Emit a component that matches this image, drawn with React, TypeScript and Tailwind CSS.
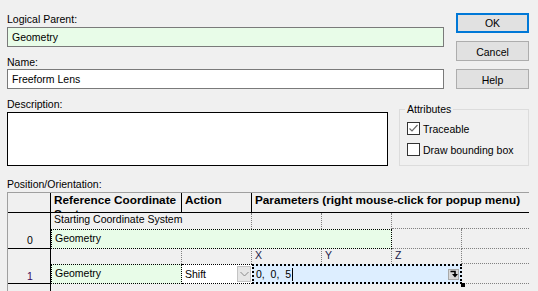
import React from 'react';

const dlgFont = "font-['Liberation_Sans',Arial,sans-serif]";

function Checkbox({ checked }: { checked?: boolean }) {
  return (
    <span className="w-[13px] h-[13px] border border-[#333333] bg-white flex items-center justify-center shrink-0">
      {checked && (
        <svg width="11" height="11" viewBox="0 0 11 11">
          <path d="M1.5 5.5 L4 8 L9.5 2" fill="none" stroke="#6a6a6a" strokeWidth="1.2" />
        </svg>
      )}
    </span>
  );
}

function Button({ label, primary }: { label: string; primary?: boolean }) {
  return (
    <div
      className={
        primary
          ? 'h-[20px] border-2 border-[#0078d7] bg-[#e1e1e1] flex items-center justify-center leading-[14px]'
          : 'h-[20px] border border-[#adadad] bg-[#e1e1e1] flex items-center justify-center leading-[14px] pt-[2px]'
      }
    >
      {label}
    </div>
  );
}

export default function App() {
  return (
    <div className={`w-[538px] h-[291px] overflow-hidden bg-[#f0f0f0] pl-[7px] pr-[9px] pt-[12px] text-[10.5px] leading-[14px] text-black ${dlgFont}`}>
      <div className="flex justify-between">
        <div className="w-[437px]">
          <div>Logical Parent:</div>
          <div className="mt-[1px] h-[20px] border border-[#7a7a7a] bg-[#e8fce8] pl-[4px] leading-[18px]">Geometry</div>
          <div className="mt-[8px]">Name:</div>
          <div className="h-[20px] border border-[#7a7a7a] bg-white pl-[4px] leading-[18px]">Freeform Lens</div>
        </div>
        <div className="w-[73px] mt-[1px] flex flex-col gap-[8px]">
          <Button label="OK" primary />
          <Button label="Cancel" />
          <Button label="Help" />
        </div>
      </div>

      <div className="mt-[8px] flex justify-between">
        <div className="w-[381px]">
          <div>Description:</div>
          <div className="mt-[1px] h-[54px] border border-black bg-white" />
        </div>
        <fieldset className="w-[130px] h-[64px] mt-[5px] border border-[#dcdcdc]">
          <legend className="ml-[5px] px-[2px]">Attributes</legend>
          <div className="mt-[6px] pl-[7px] h-[13px] flex items-center gap-[3px]">
            <Checkbox checked />
            <span>Traceable</span>
          </div>
          <div className="mt-[8px] pl-[7px] h-[13px] flex items-center gap-[3px]">
            <Checkbox />
            <span>Draw bounding box</span>
          </div>
        </fieldset>
      </div>

      <div className="mt-[11px]">Position/Orientation:</div>

      <div className="mt-[1px] border-l border-t border-[#a0a0a0]">
        {/* header */}
        <div className="h-[20px] flex border-b border-black font-bold text-[11.75px] leading-[14px]">
          <div className="w-[43px] border-r border-black" />
          <div className="w-[131px] border-r border-black pl-[3px] overflow-hidden">Reference Coordinate System</div>
          <div className="w-[70px] border-r border-black pl-[3px] overflow-hidden">Action</div>
          <div className="flex-1 pl-[3px] overflow-hidden whitespace-nowrap">Parameters (right mouse-click for popup menu)</div>
        </div>

        {/* row 0 */}
        <div className="flex">
          <div className="w-[43px] h-[36px] border-r border-b border-black flex items-end justify-center pb-[1px] pl-[2px]">0</div>
          <div className="flex-1 flex flex-col">
            <div className="h-[16px] flex">
              <div className="w-[201px] border-r border-dotted border-[#808080] pl-[3px] whitespace-nowrap leading-[13px]">Starting Coordinate System</div>
              <div className="w-[70px] border-r border-dotted border-[#808080]" />
              <div className="w-[70px] border-r border-dotted border-[#808080]" />
              <div className="w-[70px] border-b border-dotted border-[#808080]" />
              <div className="flex-1 border-b border-dotted border-[#808080]" />
            </div>
            <div className="h-[20px] flex">
              <div className="w-[341px] border border-dotted border-black bg-[#e8fce8] pl-[3px] leading-[16px]">Geometry</div>
              <div className="w-[70px] border-r border-b border-dotted border-[#808080]" />
              <div className="flex-1 border-b border-dotted border-[#808080]" />
            </div>
          </div>
        </div>

        {/* row 1 */}
        <div className="flex">
          <div className="w-[43px] h-[35px] border-r border-b border-black flex items-end justify-center pl-[2px] text-[#3a0a5a]">1</div>
          <div className="flex-1 flex flex-col">
            <div className="h-[15px] flex leading-[13px] text-[#20204a]">
              <div className="w-[131px] border-r border-dotted border-[#808080]" />
              <div className="w-[70px] border-r border-dotted border-[#808080]" />
              <div className="w-[70px] border-r border-dotted border-[#808080] pl-[3px]">X</div>
              <div className="w-[70px] border-r border-dotted border-[#808080] pl-[3px]">Y</div>
              <div className="w-[70px] border-r border-dotted border-[#808080] pl-[3px]">Z</div>
              <div className="flex-1 border-b border-dotted border-[#808080]" />
            </div>
            <div className="h-[20px] flex">
              <div className="w-[131px] border border-dotted border-black bg-[#e8fce8] pl-[3px] leading-[16px]">Geometry</div>
              <div className="w-[70px] border-y border-dotted border-black bg-white pl-[3px] flex items-center justify-between pr-[1px]">
                <span className="leading-[14px]">Shift</span>
                <span className="w-[14px] h-[16px] bg-[#e6e6e6] border border-[#c4c4c4] flex items-center justify-center">
                  <svg width="9" height="6" viewBox="0 0 9 6">
                    <path d="M0.5 1 L4.5 5 L8.5 1" fill="none" stroke="#8a8a8a" strokeWidth="1" />
                  </svg>
                </span>
              </div>
              <div className="w-[210px] relative border-2 border-dotted border-black bg-[#ddeeff] pl-[2px] flex items-center justify-between pr-[1px]">
                <span className="leading-[14px] flex items-center">
                  0,&nbsp; 0,&nbsp; 5<span className="ml-[1px] w-[1px] h-[13px] bg-black" />
                </span>
                <span className="w-[11px] h-[11px] bg-[#d8d8d8] border border-[#a8a8a8] flex items-center justify-center">
                  <svg width="8" height="8" viewBox="0 0 8 8">
                    <path d="M0.5 1.5 H5 V4" fill="none" stroke="#000" strokeWidth="1.6" />
                    <path d="M2 4 H8 L5 7.5 Z" fill="#000" />
                  </svg>
                </span>
                <span className="absolute right-[-5px] bottom-[-5px] w-[4px] h-[4px] bg-black" />
              </div>
              <div className="flex-1 border-b border-dotted border-[#808080]" />
            </div>
          </div>
        </div>

        {/* row 2 */}
        <div className="flex">
          <div className="w-[43px] h-[20px] border-r border-black" />
          <div className="flex-1" />
        </div>
      </div>
    </div>
  );
}
